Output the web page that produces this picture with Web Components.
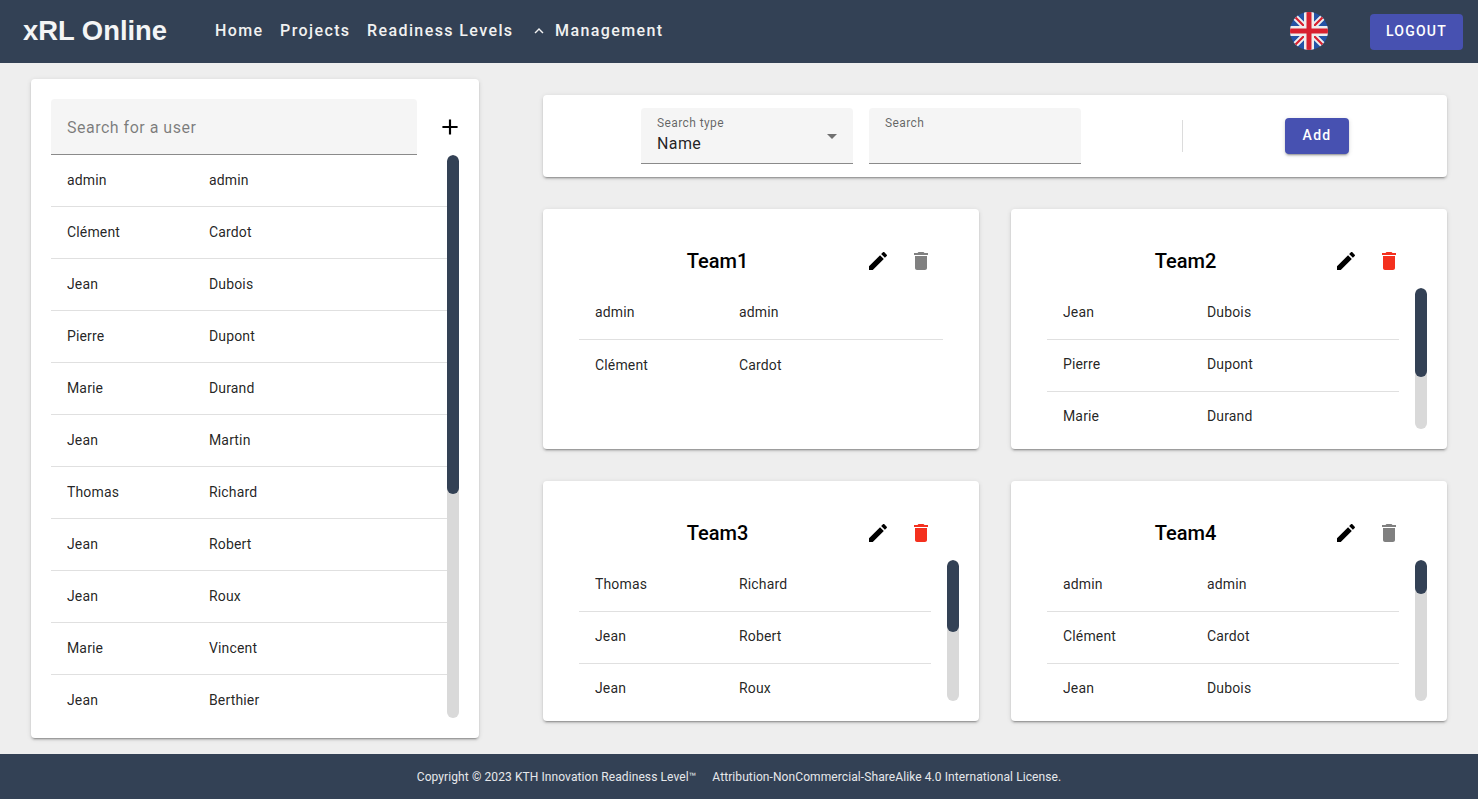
<!DOCTYPE html>
<html>
<head>
<meta charset="utf-8">
<title>xRL Online</title>
<style>
  html, body { margin: 0; height: 100%; }
  body {
    display: flex;
    flex-direction: column;
    height: 100vh;
    overflow: hidden;
    background: #eeeeee;
    font-family: Roboto, "Liberation Sans", sans-serif;
    color: rgba(0, 0, 0, 0.87);
  }
  .main { flex: 1; display: flex; min-height: 0; }
</style>
</head>
<body>
  <top-bar></top-bar>
  <div class="main">
    <user-panel>
      <user-row first="admin" last="admin"></user-row>
      <user-row first="Clément" last="Cardot"></user-row>
      <user-row first="Jean" last="Dubois"></user-row>
      <user-row first="Pierre" last="Dupont"></user-row>
      <user-row first="Marie" last="Durand"></user-row>
      <user-row first="Jean" last="Martin"></user-row>
      <user-row first="Thomas" last="Richard"></user-row>
      <user-row first="Jean" last="Robert"></user-row>
      <user-row first="Jean" last="Roux"></user-row>
      <user-row first="Marie" last="Vincent"></user-row>
      <user-row first="Jean" last="Berthier"></user-row>
    </user-panel>
    <team-board>
      <search-card slot="search"></search-card>
      <team-card name="Team1" can-delete="false">
        <user-row first="admin" last="admin"></user-row>
        <user-row first="Clément" last="Cardot" style="--row-pad: 2px"></user-row>
      </team-card>
      <team-card name="Team2" thumb="89">
        <user-row first="Jean" last="Dubois"></user-row>
        <user-row first="Pierre" last="Dupont"></user-row>
        <user-row first="Marie" last="Durand"></user-row>
      </team-card>
      <team-card name="Team3" thumb="72">
        <user-row first="Thomas" last="Richard"></user-row>
        <user-row first="Jean" last="Robert"></user-row>
        <user-row first="Jean" last="Roux"></user-row>
      </team-card>
      <team-card name="Team4" thumb="34" can-delete="false">
        <user-row first="admin" last="admin"></user-row>
        <user-row first="Clément" last="Cardot"></user-row>
        <user-row first="Jean" last="Dubois"></user-row>
      </team-card>
    </team-board>
  </div>
  <page-footer></page-footer>

<script>
const ICONS = {
  pencil: 'M3 17.25V21h3.75L17.81 9.94l-3.75-3.75L3 17.25zM20.71 7.04c.39-.39.39-1.02 0-1.41l-2.34-2.34c-.39-.39-1.02-.39-1.41 0l-1.83 1.83 3.75 3.75 1.83-1.83z',
  trash: 'M6 19c0 1.1.9 2 2 2h8c1.1 0 2-.9 2-2V7H6v12zM19 4h-3.5l-1-1h-5l-1 1H5v2h14V4z',
  chevron: 'M12 8l-6 6 1.41 1.41L12 10.83l4.59 4.58L18 14z',
  plus: 'M19 13h-6v6h-2v-6H5v-2h6V5h2v6h6v2z',
  caret: 'M7 10l5 5 5-5z'
};

class UiIcon extends HTMLElement {
  connectedCallback() {
    const size = this.getAttribute('size') || 24;
    const path = ICONS[this.getAttribute('name')];
    this.attachShadow({ mode: 'open' });
    this.shadowRoot.innerHTML = `
      <style>
        :host { display: inline-flex; width: ${size}px; height: ${size}px; flex: none; }
        svg { width: 100%; height: 100%; fill: currentColor; display: block; }
      </style>
      <svg viewBox="0 0 24 24"><path d="${path}"></path></svg>
    `;
  }
}

class TopBar extends HTMLElement {
  connectedCallback() {
    this.attachShadow({ mode: 'open' });
    this.shadowRoot.innerHTML = `
      <style>
        :host {
          display: flex;
          align-items: center;
          flex: none;
          height: 63px;
          padding: 0 15px 0 23px;
          background: #334155;
          color: #f1f1f1;
        }
        .logo {
          width: 192px;
          padding-bottom: 2px;
          font: bold 27.4px "Liberation Sans", Arial, sans-serif;
          color: #f4f5f6;
        }
        nav {
          display: flex;
          align-items: center;
          padding-bottom: 2px;
          font-size: 16px;
          font-weight: 500;
          letter-spacing: 1.4px;
          flex: 1;
        }
        nav span { margin-right: 16.5px; }
        nav ui-icon { margin: 0 7px 0 0; }
        .flag { width: 38px; height: 38px; display: block; margin: 0 42px 1px 0; }
        button {
          width: 93px;
          height: 36px;
          border: 0;
          border-radius: 4px;
          padding: 0 0 2px;
          background: #4751b1;
          color: #fff;
          font: 500 14px Roboto, sans-serif;
          letter-spacing: 1.25px;
        }
      </style>
      <div class="logo">xRL Online</div>
      <nav>
        <span>Home</span>
        <span>Projects</span>
        <span>Readiness Levels</span>
        <ui-icon name="chevron" size="18"></ui-icon>
        <span>Management</span>
      </nav>
      <svg class="flag" viewBox="0 0 38 38">
        <defs><clipPath id="round"><circle cx="19" cy="19" r="19"></circle></clipPath></defs>
        <g clip-path="url(#round)">
          <rect width="38" height="38" fill="#2453a6"></rect>
          <path d="M0 0L38 38M38 0L0 38" stroke="#eeeeee" stroke-width="6"></path>
          <path d="M0 0L38 38M38 0L0 38" stroke="#d8202f" stroke-width="2.2"></path>
          <rect x="14" width="10" height="38" fill="#eeeeee"></rect>
          <rect y="14" width="38" height="10" fill="#eeeeee"></rect>
          <rect x="16.5" width="5" height="38" fill="#d8202f"></rect>
          <rect y="16.5" width="38" height="5" fill="#d8202f"></rect>
        </g>
      </svg>
      <button>LOGOUT</button>
    `;
  }
}

class UserRow extends HTMLElement {
  connectedCallback() {
    this.attachShadow({ mode: 'open' });
    this.shadowRoot.innerHTML = `
      <style>
        :host {
          display: flex;
          align-items: center;
          box-sizing: border-box;
          height: 52px;
          padding: 0 0 var(--row-pad, 2px) 16px;
          border-bottom: 1px solid #e0e0e0;
          font-size: 14px;
          letter-spacing: 0.15px;
          color: rgba(0, 0, 0, 0.87);
        }
        :host(:last-child) { border-bottom: 0; }
        .first { width: var(--first-col, 144px); }
      </style>
      <span class="first">${this.getAttribute('first')}</span>
      <span>${this.getAttribute('last')}</span>
    `;
  }
}

class ScrollTrack extends HTMLElement {
  connectedCallback() {
    this.attachShadow({ mode: 'open' });
    this.shadowRoot.innerHTML = `
      <style>
        :host {
          display: block;
          flex: none;
          width: 12px;
          border-radius: 6px;
          background: #d9d9d9;
          overflow: hidden;
        }
        div { height: ${this.getAttribute('thumb')}px; border-radius: 6px; background: #334155; }
      </style>
      <div></div>
    `;
  }
}

class UserPanel extends HTMLElement {
  connectedCallback() {
    this.attachShadow({ mode: 'open' });
    this.shadowRoot.innerHTML = `
      <style>
        :host {
          display: flex;
          flex-direction: column;
          flex: none;
          box-sizing: border-box;
          width: 448px;
          margin: 16px 0 16px 31px;
          padding: 20px;
          background: #fff;
          border-radius: 4px;
          box-shadow: 0 3px 1px -2px rgba(0,0,0,.2), 0 2px 2px 0 rgba(0,0,0,.14), 0 1px 5px 0 rgba(0,0,0,.12);
          --first-col: 142px;
        }
        .top { display: flex; align-items: center; flex: none; }
        .field {
          box-sizing: border-box;
          flex: none;
          width: 366px;
          height: 56px;
          padding: 1px 0 0 16px;
          display: flex;
          align-items: center;
          background: #f5f5f5;
          border-bottom: 1px solid #8a8a8a;
          border-radius: 4px 4px 0 0;
          font-size: 16px;
          letter-spacing: 0.5px;
          color: rgba(0, 0, 0, 0.5);
        }
        ui-icon { margin-left: 20px; color: #000; }
        .body { display: flex; flex: 1; min-height: 0; }
        .list { flex: 1; overflow: hidden; }
      </style>
      <div class="top">
        <div class="field">Search for a user</div>
        <ui-icon name="plus" size="26"></ui-icon>
      </div>
      <div class="body">
        <div class="list"><slot></slot></div>
        <scroll-track thumb="339"></scroll-track>
      </div>
    `;
  }
}

class TeamBoard extends HTMLElement {
  connectedCallback() {
    this.attachShadow({ mode: 'open' });
    this.shadowRoot.innerHTML = `
      <style>
        :host {
          display: flex;
          flex-direction: column;
          flex: none;
          box-sizing: border-box;
          width: 904px;
          margin-left: 64px;
          padding-top: 32px;
          gap: 32px;
        }
        .grid { display: grid; grid-template-columns: 436px 436px; grid-auto-rows: 240px; gap: 32px; }
      </style>
      <slot name="search"></slot>
      <div class="grid"><slot></slot></div>
    `;
  }
}

class SearchCard extends HTMLElement {
  connectedCallback() {
    this.attachShadow({ mode: 'open' });
    this.shadowRoot.innerHTML = `
      <style>
        :host {
          display: flex;
          align-items: center;
          box-sizing: border-box;
          height: 82px;
          padding-left: 98px;
          background: #fff;
          border-radius: 4px;
          box-shadow: 0 3px 1px -2px rgba(0,0,0,.2), 0 2px 2px 0 rgba(0,0,0,.14), 0 1px 5px 0 rgba(0,0,0,.12);
        }
        .field {
          box-sizing: border-box;
          position: relative;
          width: 212px;
          height: 56px;
          margin-right: 16px;
          padding: 8px 16px 0;
          background: #f5f5f5;
          border-bottom: 1px solid #8a8a8a;
          border-radius: 4px 4px 0 0;
        }
        .label { font-size: 12px; line-height: 14px; letter-spacing: 0.4px; color: rgba(0, 0, 0, 0.6); }
        .value { margin-top: 2px; font-size: 16px; line-height: 24px; letter-spacing: 0.4px; color: rgba(0, 0, 0, 0.87); }
        .field ui-icon { position: absolute; right: 9px; top: 16px; color: rgba(0, 0, 0, 0.54); }
        .rule { width: 1px; height: 32px; margin-left: 85px; background: #dcdcdc; }
        button {
          width: 64px;
          height: 36px;
          margin-left: 102px;
          padding: 0 0 2px;
          border: 0;
          border-radius: 4px;
          background: #4751b1;
          color: #fff;
          font: 500 14px Roboto, sans-serif;
          letter-spacing: 1.25px;
          box-shadow: 0 3px 1px -2px rgba(0,0,0,.2), 0 2px 2px 0 rgba(0,0,0,.14), 0 1px 5px 0 rgba(0,0,0,.12);
        }
      </style>
      <div class="field">
        <div class="label">Search type</div>
        <div class="value">Name</div>
        <ui-icon name="caret"></ui-icon>
      </div>
      <div class="field">
        <div class="label">Search</div>
      </div>
      <div class="rule"></div>
      <button>Add</button>
    `;
  }
}

class TeamCard extends HTMLElement {
  connectedCallback() {
    const thumb = this.getAttribute('thumb');
    const canDelete = this.getAttribute('can-delete') !== 'false';
    this.attachShadow({ mode: 'open' });
    this.shadowRoot.innerHTML = `
      <style>
        :host {
          display: flex;
          flex-direction: column;
          box-sizing: border-box;
          height: 240px;
          padding: 0 20px 20px 36px;
          background: #fff;
          border-radius: 4px;
          box-shadow: 0 3px 1px -2px rgba(0,0,0,.2), 0 2px 2px 0 rgba(0,0,0,.14), 0 1px 5px 0 rgba(0,0,0,.12);
          --row-pad: 4px;
        }
        .head { display: flex; align-items: center; flex: none; box-sizing: border-box; height: 79px; padding-top: 24px; }
        h3 { flex: none; width: 277px; margin: 0; text-align: center; font-size: 20px; font-weight: 500; color: #000; }
        .pencil { margin-left: 10px; color: #000; }
        .trash { margin-left: 19px; color: ${canDelete ? '#f4301e' : '#808080'}; }
        .body { display: flex; flex: 1; min-height: 0; gap: 16px; }
        .list { flex: 1; overflow: hidden; }
        .spacer { width: 0; }
      </style>
      <div class="head">
        <h3>${this.getAttribute('name')}</h3>
        <ui-icon class="pencil" name="pencil"></ui-icon>
        <ui-icon class="trash" name="trash"></ui-icon>
      </div>
      <div class="body">
        <div class="list"><slot></slot></div>
        ${thumb ? `<scroll-track thumb="${thumb}"></scroll-track>` : '<div class="spacer"></div>'}
      </div>
    `;
  }
}

class PageFooter extends HTMLElement {
  connectedCallback() {
    this.attachShadow({ mode: 'open' });
    this.shadowRoot.innerHTML = `
      <style>
        :host {
          display: flex;
          justify-content: center;
          align-items: center;
          flex: none;
          height: 45px;
          background: #334155;
          color: #e6e8eb;
          font-size: 12px;
          letter-spacing: 0.09px;
        }
        span + span { margin-left: 16px; }
      </style>
      <span>Copyright © 2023 KTH Innovation Readiness Level™</span>
      <span>Attribution-NonCommercial-ShareAlike 4.0 International License.</span>
    `;
  }
}

customElements.define('ui-icon', UiIcon);
customElements.define('top-bar', TopBar);
customElements.define('user-row', UserRow);
customElements.define('scroll-track', ScrollTrack);
customElements.define('user-panel', UserPanel);
customElements.define('team-board', TeamBoard);
customElements.define('search-card', SearchCard);
customElements.define('team-card', TeamCard);
customElements.define('page-footer', PageFooter);
</script>
</body>
</html>
